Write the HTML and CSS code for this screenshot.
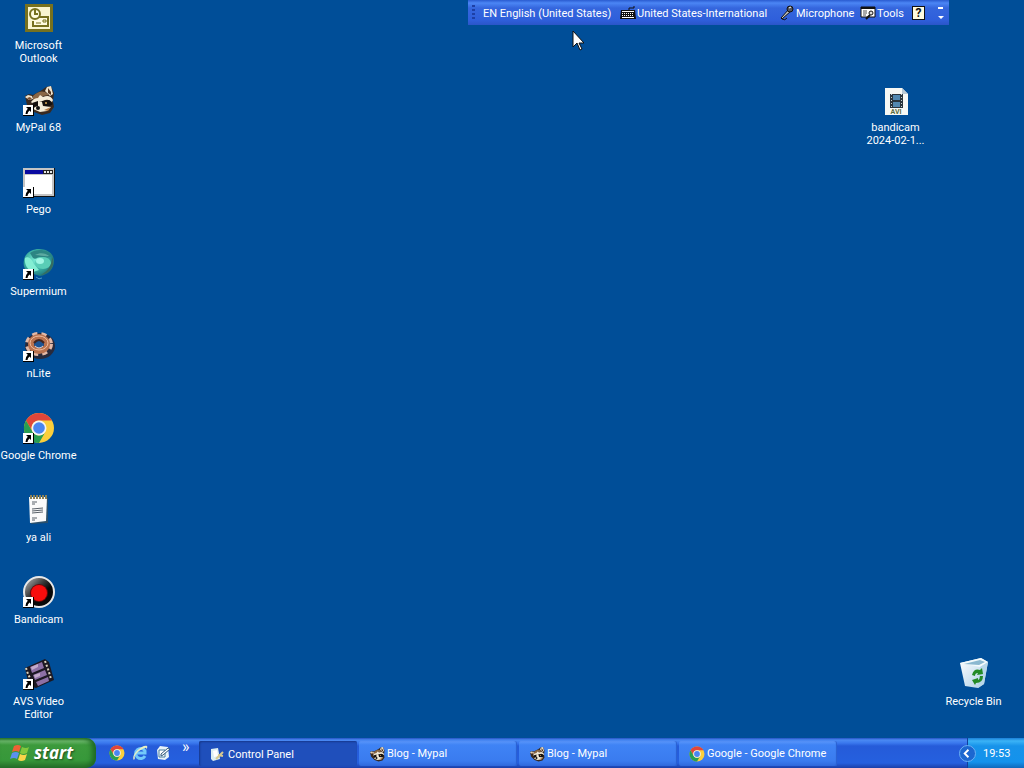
FILE: index.html
```html
<!DOCTYPE html>
<html lang="en">
<head>
    <meta charset="utf-8">
    <title>Desktop</title>
    <link rel="stylesheet" href="styles.css">
</head>
<body>
    <!-- shared icons -->
    <svg class="sprites" width="0" height="0" aria-hidden="true">
        <defs>
            <linearGradient id="bin" x1="0" x2="1" y1="0" y2="1">
                <stop offset="0" stop-color="#fff"/><stop offset="1" stop-color="#a9cde6"/>
            </linearGradient>
            <radialGradient id="globe" cx=".4" cy=".4" r=".65">
                <stop offset="0" stop-color="#7ff0d8"/><stop offset=".6" stop-color="#35a79d"/><stop offset="1" stop-color="#1c6f78"/>
            </radialGradient>
            <linearGradient id="rec" x1="0" x2="1" y1="0" y2="1">
                <stop offset="0" stop-color="#c4c4c4"/><stop offset=".4" stop-color="#3b3b3b"/><stop offset=".6" stop-color="#080808"/>
            </linearGradient>
        </defs>
        <symbol id="shortcut" viewBox="0 0 11 11">
            <path d="M0 0h11v11H0z" fill="#000"/>
            <path d="M0 0h10v10H0z" fill="#fff"/>
            <path d="M3 2h5v5L6.500 5.500Q4.500 7 4.500 9H2.500Q2.500 6 4.800 3.800z" fill="#000"/>
        </symbol>
        <symbol id="chrome" viewBox="0 0 32 32">
            <circle cx="16" cy="16" r="15" fill="#fbcf3b"/>
            <path d="M3 8.500A15 15 0 0 1 29 8.500H16A7.500 7.500 0 0 0 9.500 19.800z" fill="#e0463a"/>
            <path d="M3 8.500A15 15 0 0 0 16 31L22.500 19.800A7.500 7.500 0 0 1 9.500 19.800z" fill="#289e52"/>
            <circle cx="16" cy="16" r="7.500" fill="#f4f4f4"/>
            <circle cx="16" cy="16" r="5.800" fill="#4a86f0"/>
        </symbol>
        <symbol id="raccoon" viewBox="0 0 32 32">
            <path d="M2 12l4-2 4 1 9-5 4-3 5-1 3 7-1 8 1 6-4 6-8 2-8-3-7-7z" fill="#3a2a20"/>
            <path d="M22 7l2-4 4-1 2 8-3 2z" fill="#efe3cc"/>
            <path d="M25 9V4l3 4v3z" fill="#54331e"/>
            <path d="M2 13l3-2 4 1 1 3-4 1z" fill="#efe3cc"/>
            <path d="M4 14l3-1 2 2-3 1z" fill="#7b4d2e"/>
            <path d="M10 12Q16 6 22 8l4 3-6 1-4 2-6 2z" fill="#8a6746"/>
            <path d="M8 18q3-4 7-4l2-3 3 2q7-3 10 3l-1 2q-4-4-9-1l-4 1-6 2z" fill="#f5ecd8"/>
            <path d="M9 19l6-2 0 5-4 1zM19 17l7-1 4 4-5 3-6-2z" fill="#15100e"/>
            <path d="M15 18l4 0 1 4 8 1-4 4-7 1-7-3 2-2 3-1z" fill="#f5ecd8"/>
            <path d="M21 26l7-3-3 4z" fill="#b27a45"/>
            <ellipse cx="15" cy="24" rx="2" ry="2" fill="#111"/>
            <circle cx="23" cy="19" r="1" fill="#dca85a"/>
        </symbol>
    </svg>

    <main class="desktop">
        <div class="icon-column">
            <button class="shortcut">
                <svg class="icon" viewBox="0 0 32 32">
                    <path d="M2 2h28v28H2z" fill="#77711f"/>
                    <path d="M5 5h22v22H5z" fill="#f9f5d0"/>
                    <path d="M14 15h11v9H10v-5" fill="#fffbe0" stroke="#77711f" stroke-width="2"/>
                    <path d="M13 21h5M20 18h3v2h-3z" stroke="#77711f" fill="none"/>
                    <circle cx="12" cy="12" r="5" fill="#fffbe0" stroke="#77711f" stroke-width="2"/>
                    <path d="M12 8v4h3" stroke="#77711f" stroke-width="2" fill="none"/>
                </svg>
                <span class="label">Microsoft Outlook</span>
            </button>
            <button class="shortcut">
                <svg class="icon" viewBox="0 0 32 32">
                    <use href="#raccoon" width="32" height="32"/>
                    <use href="#shortcut" y="21" width="11" height="11"/>
                </svg>
                <span class="label">MyPal 68</span>
            </button>
            <button class="shortcut">
                <svg class="icon" viewBox="0 0 32 32">
                    <path d="M0 2h32v29H0z" fill="#111"/>
                    <path d="M0 2h31v28H0z" fill="#c4c4c4"/>
                    <path d="M2 4h28v4H2z" fill="#0a0aa0"/>
                    <path d="M2 9h27v19H2z" fill="#fff"/>
                    <path d="M20 4h10v4H20z" fill="#222"/>
                    <path d="M21 5h2v2h-2zM24 5h2v2h-2zM27 5h2v2h-2z" fill="#e8e8e8"/>
                    <use href="#shortcut" y="21" width="11" height="11"/>
                </svg>
                <span class="label">Pego</span>
            </button>
            <button class="shortcut">
                <svg class="icon" viewBox="0 0 32 32">
                    <path d="M1 12C2 5 9 1 16 1c9 0 15 5 15 12 0 8-6 14-14 15L4 24C1 20 0 17 1 12z" fill="url(#globe)"/>
                    <path d="M7 5c6-5 19-4 22 3-4 3-8 1-11 1-4 0-5 3-8 1z" fill="#2c8583"/>
                    <path d="M12 7c5-3 11-2 14 1-4 1-8-1-14-1z" fill="#5ca9a0"/>
                    <path d="M2 10c3-2 7 1 9 6l5 6-6 2c-5-2-9-7-8-14z" fill="#83eed3"/>
                    <ellipse cx="20" cy="15" rx="8" ry="6" fill="#59cdb6"/>
                    <ellipse cx="17" cy="13" rx="4" ry="3" fill="#a1f6e4"/>
                    <path d="M29 9c4 8-2 17-11 18 6-4 11-8 11-18z" fill="#376c60"/>
                    <path d="M13 29q3 3 6 1" stroke="#4a9ac6" fill="none"/>
                    <use href="#shortcut" y="21" width="11" height="11"/>
                </svg>
                <span class="label">Supermium</span>
            </button>
            <button class="shortcut">
                <svg class="icon" viewBox="0 0 32 32">
                    <ellipse cx="17" cy="16" rx="15" ry="13" fill="#292a3b"/>
                    <ellipse cx="16" cy="14" rx="12" ry="10" fill="none" stroke="#e2b9a8" stroke-width="4" stroke-dasharray="5 4"/>
                    <ellipse cx="16" cy="14" rx="8" ry="7" fill="none" stroke="#b9724f" stroke-width="6"/>
                    <ellipse cx="16" cy="13" rx="9" ry="7" fill="none" stroke="#efbd9f"/>
                    <ellipse cx="16" cy="14" rx="5" ry="4" fill="#1b5394"/>
                    <path d="M11 13q5-6 10 0" fill="none" stroke="#43241e" stroke-width="2"/>
                    <path d="M12 16q4 4 8 0" fill="none" stroke="#e4d6d4"/>
                    <use href="#shortcut" y="21" width="11" height="11"/>
                </svg>
                <span class="label">nLite</span>
            </button>
            <button class="shortcut">
                <svg class="icon" viewBox="0 0 32 32">
                    <use href="#chrome" width="32" height="32"/>
                    <use href="#shortcut" y="21" width="11" height="11"/>
                </svg>
                <span class="label">Google Chrome</span>
            </button>
            <button class="shortcut">
                <svg class="icon" viewBox="0 0 32 32">
                    <path d="M7 3l18 1 0 25-17 1z" fill="#2b506b"/>
                    <path d="M6 3h18l-1 24L7 29z" fill="#fafafa"/>
                    <path d="M8 1v4M11 1v4M14 1v4M17 1v4M20 1v4M23 1v4" stroke="#8b8158" stroke-width="2"/>
                    <path d="M9 8h5M9 10h3M9 15l11-1M9 17l11-1M9 19l11-1M9 24h5M9 26h3" stroke="#586068"/>
                </svg>
                <span class="label">ya ali</span>
            </button>
            <button class="shortcut">
                <svg class="icon" viewBox="0 0 32 32">
                    <circle cx="16" cy="16" r="15" fill="url(#rec)" stroke="#e8e8e8" stroke-width="2"/>
                    <circle cx="16" cy="17" r="9" fill="#6b0808"/>
                    <circle cx="16" cy="17" r="8" fill="#f80d0d"/>
                    <use href="#shortcut" y="21" width="11" height="11"/>
                </svg>
                <span class="label">Bandicam</span>
            </button>
            <button class="shortcut">
                <svg class="icon" viewBox="0 0 32 32">
                    <path d="M2 10L22 1l4 3 5 18-18 8-7-2z" fill="#1c1822"/>
                    <path d="M7 9l12-5 2 6-12 5zM10 17l12-5 2 5-12 5zM13 24l12-5 1 4-11 5z" fill="#8d70a5"/>
                    <path d="M8 9l7-3 0 3-6 3zM11 17l6-2 0 3-5 2z" fill="#c3aacb"/>
                    <path d="M3 10l2 6 4 8M22 3l3 8 3 10" stroke="#ddd5bd" stroke-width="2" stroke-dasharray="2 2" fill="none"/>
                    <use href="#shortcut" y="21" width="11" height="11"/>
                </svg>
                <span class="label">AVS Video Editor</span>
            </button>
        </div>

        <button class="shortcut video-file">
            <svg class="icon" viewBox="0 0 32 32">
                <path d="M5 4h17l6 6v21H5z" fill="#f7f8f4"/>
                <path d="M22 4l6 6h-6z" fill="#b9c9d4"/>
                <path d="M10 10h13v14H10z" fill="#29343c"/>
                <path d="M13 11h7v5h-7zM13 18h7v5h-7z" fill="#5288b0"/>
                <path d="M11.500 10v14M21.500 10v14" stroke="#c6d0d3" stroke-dasharray="1 2"/>
                <text class="avi" x="16" y="30" text-anchor="middle">AVI</text>
            </svg>
            <span class="label">bandicam<br>2024-02-1...</span>
        </button>

        <button class="shortcut recycle-bin">
            <svg class="icon" viewBox="0 0 32 32">
                <path d="M2 5L23 0l7 4-4 22-6 4-13-2z" fill="url(#bin)"/>
                <path d="M2 5L23 0l7 4-8 5z" fill="#f3fafc"/>
                <path d="M6 6l16-4 5 2-6 3z" fill="#8bb8d0"/>
                <path d="M22 9l8-5-4 22-6 4z" fill="#b8d7ea"/>
                <path d="M14 17q2-7 8-5l2-2 1 6-6 1 1-2q-3 0-3 3zM25 18q0 7-7 7l-1 2-3-5 6-2v2q2-1 2-4z" fill="#238b26"/>
            </svg>
            <span class="label">Recycle Bin</span>
        </button>

        <div class="language-bar" role="toolbar">
            <span class="grip"></span>
            <button class="lang-button language">EN English (United States)</button>
            <button class="lang-button keyboard">
                <svg class="small-icon" viewBox="0 0 16 16">
                    <path d="M9 5V3h5V1" stroke="#111" fill="none"/>
                    <path d="M1 5h14l1 9H0z" fill="#111"/>
                    <path d="M2 6h12v1H2zM2 12h12v1H2z" fill="#fff"/>
                    <path d="M2 8.500h12M2 10.500h12" stroke="#fff" stroke-dasharray="1 1"/>
                </svg>
                United States-International
            </button>
            <button class="lang-button microphone">
                <svg class="small-icon" viewBox="0 0 16 16">
                    <path d="M2 13l8-9 2 2-9 8z" fill="#c8c8c0" stroke="#111"/>
                    <circle cx="11" cy="4" r="3" fill="#55565c" stroke="#111"/>
                    <path d="M10 3l2-1" stroke="#fff"/>
                    <path d="M3 14q3 2 5-1" stroke="#111" fill="none"/>
                </svg>
                Microphone
            </button>
            <button class="lang-button tools">
                <svg class="small-icon" viewBox="0 0 16 16">
                    <path d="M1 2h14v10H1z" fill="#fff" stroke="#111"/>
                    <path d="M1 2h14v2H1z" fill="#111"/>
                    <path d="M3 6h4M3 8h4M3 10h3" stroke="#555"/>
                    <path d="M6 14l4-4" stroke="#111" stroke-width="2"/>
                    <circle cx="11" cy="8" r="2" fill="#ddd" stroke="#111"/>
                </svg>
                Tools
            </button>
            <button class="help" aria-label="Help">?</button>
            <span class="bar-options">
                <svg viewBox="0 0 7 14"><path d="M1 1h5v2H1zM1 10h6l-3 3z" fill="#fff"/></svg>
            </span>
        </div>

        <svg class="cursor" viewBox="0 0 12 21">
            <path d="M1 1v16l4-4 3 7 2-1-3-6h5z" fill="#fff" stroke="#111"/>
        </svg>
    </main>

    <footer class="taskbar">
        <button class="start">
            <svg class="flag" viewBox="0 0 20 20">
                <path d="M4 3q4-2 7 0L9 9Q6 7 2 9z" fill="#ee6135"/>
                <path d="M12 4q4 2 7 0l-2 6q-4 2-7 0z" fill="#82c83d"/>
                <path d="M2 10q4-2 7 0l-2 6q-3-2-7 0z" fill="#5b91ee"/>
                <path d="M10 11q4 2 7 0l-2 6q-4 2-7 0z" fill="#f9d449"/>
            </svg>
            start
        </button>
        <nav class="quick-launch">
            <button class="launch" aria-label="Google Chrome">
                <svg class="small-icon"><use href="#chrome"/></svg>
            </button>
            <button class="launch" aria-label="Internet Explorer">
                <svg class="small-icon" viewBox="0 0 16 16">
                    <path d="M13 11a5 5 0 1 1 0-5v2H4" fill="none" stroke="#73c9fa" stroke-width="3"/>
                    <path d="M2 15C-2 11 10-1 15 1q1 1-1 4 1-3-1-2C8 4 1 11 3 13z" fill="#e6eec4"/>
                </svg>
            </button>
            <button class="launch" aria-label="Show Desktop">
                <svg class="small-icon" viewBox="0 0 16 16">
                    <path d="M2 5l3-4 8 1 1 10-4 3-7-1z" fill="#e8f3f8"/>
                    <path d="M4 5h6v7H4z" fill="#fff" stroke="#477d9d"/>
                    <path d="M6 9l7-6 2 1-7 6-2 1z" fill="#fff" stroke="#315a7d"/>
                </svg>
            </button>
            <span class="more">»</span>
        </nav>
        <div class="tasks">
            <button class="task active">
                <svg class="small-icon" viewBox="0 0 16 16">
                    <path d="M2 2l7-1 2 11-7 2-2-2z" fill="#dceef2"/>
                    <path d="M4 4l4-1 1 6-4 1z" fill="#fff"/>
                    <path d="M7 12l7-7M9 8l5 1" stroke="#d6c890" stroke-width="2"/>
                </svg>
                Control Panel
            </button>
            <button class="task">
                <svg class="small-icon"><use href="#raccoon"/></svg>
                Blog - Mypal
            </button>
            <button class="task">
                <svg class="small-icon"><use href="#raccoon"/></svg>
                Blog - Mypal
            </button>
            <button class="task">
                <svg class="small-icon"><use href="#chrome"/></svg>
                Google - Google Chrome
            </button>
        </div>
        <div class="tray">
            <button class="tray-toggle" aria-label="Show hidden icons">
                <svg viewBox="0 0 16 16"><path d="M9 4L5 8l4 4" fill="none" stroke="#fff" stroke-width="2"/></svg>
            </button>
            <time>19:53</time>
        </div>
    </footer>
</body>
</html>
```

FILE: styles.css
```css
* {
    box-sizing: border-box;
}

body {
    display: flex;
    flex-direction: column;
    height: 100vh;
    margin: 0;
    overflow: hidden;
    background-color: #004e98;
    color: #fff;
    font-family: Tahoma, Roboto, sans-serif;
    font-size: 11px;
    line-height: 13px;
}

button {
    margin: 0;
    padding: 0;
    border: none;
    background: none;
    color: inherit;
    font: inherit;
}

svg {
    display: block;
    flex-shrink: 0;
}

.sprites {
    position: absolute;
}

.desktop {
    position: relative;
    flex: 1;
    min-height: 0;
}

/* desktop icons */
.icon-column {
    display: grid;
    grid-auto-rows: 82px;
    width: 77px;
    padding-top: 2px;
}

.shortcut {
    display: flex;
    flex-direction: column;
    align-items: center;
    gap: 5px;
    width: 77px;
}

.icon {
    width: 32px;
    height: 32px;
}

.label {
    width: 79px;
    text-align: center;
}

.video-file {
    position: absolute;
    top: 84px;
    right: 90px;
}

.recycle-bin {
    position: absolute;
    right: 12px;
    bottom: 30px;
}

.avi {
    fill: #5b6b3c;
    font-size: 7px;
    font-weight: bold;
}

.cursor {
    position: absolute;
    top: 30px;
    left: 572px;
    width: 12px;
    height: 21px;
}

/* language bar */
.language-bar {
    position: absolute;
    top: 0;
    right: 75px;
    display: flex;
    align-items: center;
    width: 481px;
    height: 25px;
    padding: 1px 5px 0 4px;
    background: linear-gradient(#2a5bd0, #4b86f5 3px, #3566dd 8px, #2f5fdb 20px, #2a55c8);
}

.grip {
    width: 3px;
    height: 16px;
    margin-right: 8px;
    background: repeating-linear-gradient(#1d3fa5 0 2px, transparent 2px 4px);
}

.lang-button {
    display: flex;
    align-items: center;
    gap: 1px;
    white-space: nowrap;
}

.language {
    width: 137px;
}

.keyboard {
    width: 159px;
}

.microphone {
    width: 81px;
}

.tools {
    width: 52px;
}

.small-icon {
    width: 16px;
    height: 16px;
}

.help {
    width: 13px;
    height: 14px;
    border: 1px solid #111;
    background-color: #fffbe0;
    color: #111;
    font-size: 12px;
    font-weight: bold;
    line-height: 12px;
}

.bar-options {
    width: 7px;
    margin-left: auto;
}

/* taskbar */
.taskbar {
    display: flex;
    height: 30px;
    background: linear-gradient(#2453c4, #4a8af3 2px, #3a78ee 5px, #255bd9 8px, #2560df 25px, #1b3fa8);
}

.start {
    display: flex;
    align-items: center;
    gap: 4px;
    width: 96px;
    padding: 0 0 1px 10px;
    border-radius: 0 10px 10px 0;
    background: linear-gradient(#2f7a2f, #6bb86b 3px, #3c9a3c 7px, #37983a 22px, #27702a);
    box-shadow: inset -4px 0 5px #1f6a24;
    font-family: "Open Sans", sans-serif;
    font-size: 17px;
    font-style: italic;
    font-weight: bold;
    line-height: 20px;
    text-shadow: 1px 1px 2px #1d4a1d;
}

.flag {
    width: 20px;
    height: 20px;
}

.quick-launch {
    display: flex;
    align-items: center;
    gap: 7px;
    width: 103px;
    padding-left: 13px;
}

.more {
    align-self: flex-start;
    padding: 2px 0 0 4px;
    font-size: 16px;
}

.tasks {
    display: flex;
    flex: 1;
    gap: 2px;
    padding: 3px 0 2px;
}

.task {
    display: flex;
    align-items: center;
    gap: 2px;
    width: 158px;
    padding-left: 10px;
    border-radius: 2px;
    background: linear-gradient(#5b97fb, #3f83f5 4px, #3a7bef 20px, #3069dc);
    box-shadow: inset -1px 0 1px #2a5fd0;
    white-space: nowrap;
}

.task.active {
    gap: 3px;
    padding-top: 2px;
    background: #1f4fbb;
    box-shadow: inset 1px 1px 2px #16388c;
}

.tray {
    display: flex;
    align-items: center;
    width: 57px;
    border-left: 1px solid #123f9b;
    background: linear-gradient(#1a7fd8, #3bb3f6 3px, #1793ea 8px, #1492ec 24px, #0f68bb);
}

.tray-toggle {
    width: 17px;
    height: 17px;
    margin: 0 7px 0 -9px;
    border: 1px solid #6cb2f5;
    border-radius: 50%;
    background-color: #1c67d0;
}
```
